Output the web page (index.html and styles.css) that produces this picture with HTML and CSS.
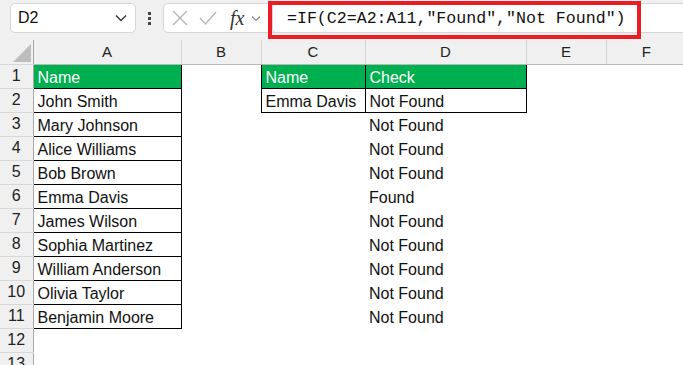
FILE: index.html
```html
<!DOCTYPE html>
<html lang="en">
<head>
    <meta charset="UTF-8">
    <title>IF lookup - Sheet1</title>
    <link rel="stylesheet" href="styles.css">
</head>
<body>
    <div class="toolbar">
        <div class="name-box">
            <span>D2</span>
            <svg class="chev" width="12" height="8" viewBox="0 0 12 8"><path d="M1 1.5 L6 6.5 L11 1.5" fill="none" stroke="#333" stroke-width="1.3"/></svg>
        </div>
        <div class="dots"><i></i><i></i><i></i></div>
        <div class="fn-box">
            <svg width="18" height="18" viewBox="0 0 18 18"><path d="M2 2 L16 16 M16 2 L2 16" stroke="#b5b5b5" stroke-width="1.4"/></svg>
            <svg width="20" height="18" viewBox="0 0 20 18"><path d="M2 9 L7.5 15 L18 3" fill="none" stroke="#b5b5b5" stroke-width="1.4"/></svg>
            <span class="fx">fx</span>
            <svg class="chev" width="10" height="7" viewBox="0 0 10 7"><path d="M1 1.5 L5 5.5 L9 1.5" fill="none" stroke="#888" stroke-width="1.2"/></svg>
        </div>
        <div class="formula">=IF(C2=A2:A11,"Found","Not Found")</div>
        <div class="highlight"></div>
    </div>

    <table class="sheet">
        <colgroup>
            <col class="c-row"><col class="c-a"><col class="c-b"><col class="c-c"><col class="c-d"><col class="c-e"><col class="c-f">
        </colgroup>
        <tr class="col-head">
            <th class="corner"><span class="tri"></span></th>
            <th>A</th><th>B</th><th>C</th><th>D</th><th>E</th><th>F</th>
        </tr>
        <tr><th>1</th><td class="b hd">Name</td><td></td><td class="b hd">Name</td><td class="b hd">Check</td><td></td><td></td></tr>
        <tr><th>2</th><td class="b">John Smith</td><td></td><td class="b">Emma Davis</td><td class="b">Not Found</td><td></td><td></td></tr>
        <tr><th>3</th><td class="b">Mary Johnson</td><td></td><td></td><td>Not Found</td><td></td><td></td></tr>
        <tr><th>4</th><td class="b">Alice Williams</td><td></td><td></td><td>Not Found</td><td></td><td></td></tr>
        <tr><th>5</th><td class="b">Bob Brown</td><td></td><td></td><td>Not Found</td><td></td><td></td></tr>
        <tr><th>6</th><td class="b">Emma Davis</td><td></td><td></td><td>Found</td><td></td><td></td></tr>
        <tr><th>7</th><td class="b">James Wilson</td><td></td><td></td><td>Not Found</td><td></td><td></td></tr>
        <tr><th>8</th><td class="b">Sophia Martinez</td><td></td><td></td><td>Not Found</td><td></td><td></td></tr>
        <tr><th>9</th><td class="b">William Anderson</td><td></td><td></td><td>Not Found</td><td></td><td></td></tr>
        <tr><th>10</th><td class="b">Olivia Taylor</td><td></td><td></td><td>Not Found</td><td></td><td></td></tr>
        <tr><th>11</th><td class="b">Benjamin Moore</td><td></td><td></td><td>Not Found</td><td></td><td></td></tr>
        <tr><th>12</th><td></td><td></td><td></td><td></td><td></td><td></td></tr>
        <tr><th>13</th><td></td><td></td><td></td><td></td><td></td><td></td></tr>
    </table>
</body>
</html>
```

FILE: styles.css
```css
body {
    margin: 0;
    width: 683px;
    height: 365px;
    overflow: hidden;
    background-color: #fff;
    font-family: 'Liberation Sans', Arial, sans-serif;
    color: #111;
}
.toolbar {
    position: relative;
    height: 40px;
    background-color: #f0f0f0;
    display: flex;
    align-items: flex-start;
    padding-top: 3px;
    box-sizing: border-box;
}
.name-box {
    margin-left: 10px;
    width: 126px;
    height: 30px;
    box-sizing: border-box;
    background-color: #fff;
    border: 1px solid #d6d6d6;
    border-radius: 5px;
    display: flex;
    align-items: center;
    justify-content: space-between;
    padding: 0 8px 0 7px;
    font-size: 16px;
}
.dots {
    width: 27px;
    display: flex;
    flex-direction: column;
    align-items: center;
    gap: 2px;
    padding-top: 9px;
}
.dots i {
    width: 3px;
    height: 3px;
    background-color: #444;
}
.fn-box {
    width: 120px;
    height: 30px;
    box-sizing: border-box;
    background-color: #fff;
    border: 1px solid #d6d6d6;
    border-radius: 5px;
    display: flex;
    align-items: center;
    gap: 9px;
    padding-left: 7px;
}
.fx {
    font-family: 'Liberation Serif', 'Times New Roman', serif;
    font-style: italic;
    font-size: 20px;
    color: #333;
    margin-left: 3px;
    margin-right: -2px;
}
.formula {
    flex: 1;
    height: 30px;
    margin-left: -11px;
    box-sizing: border-box;
    background-color: #fff;
    border: 1px solid #d6d6d6;
    border-right: none;
    border-radius: 4px 0 0 4px;
    padding-left: 14px;
    font-family: 'Liberation Mono', 'Courier New', monospace;
    font-size: 16.6px;
    line-height: 29px;
    color: #111;
}
.highlight {
    position: absolute;
    left: 268px;
    top: 1px;
    width: 373px;
    height: 38px;
    box-sizing: border-box;
    border: 4px solid #ec1c24;
}
.sheet {
    border-collapse: collapse;
    table-layout: fixed;
    width: 686px;
}
.c-row { width: 33px; }
.c-a { width: 148px; }
.c-b { width: 80px; }
.c-c { width: 104px; }
.c-d { width: 161px; }
.c-e { width: 80px; }
.c-f { width: 80px; }
.sheet tr {
    height: 24px;
}
.col-head th {
    background-color: #f0f0f0;
    font-weight: normal;
    font-size: 15px;
    color: #222;
    border-left: 1px solid #d4d4d4;
    border-bottom: 1px solid #b8b8b8;
    padding: 0;
}
.col-head .corner {
    border-left: none;
    border-right: 1px solid #9a9a9a;
    position: relative;
}
.tri {
    position: absolute;
    right: 2px;
    bottom: 2px;
    width: 0;
    height: 0;
    border-left: 18px solid transparent;
    border-bottom: 18px solid #bdbdbd;
}
.sheet th {
    padding: 0;
}
.sheet tr > th:first-child {
    background-color: #f0f0f0;
    font-weight: normal;
    font-size: 16px;
    color: #222;
    text-align: center;
    border-right: 1px solid #a8a8a8;
    border-bottom: 1px solid #d8d8d8;
}
.sheet td {
    padding: 0 0 0 4px;
    font-size: 16px;
    white-space: nowrap;
    overflow: hidden;
    vertical-align: bottom;
    line-height: 21px;
}
.sheet td.b {
    border: 1px solid #000;
}
.sheet td.hd {
    background-color: #00b050;
    color: #fff;
}
```
